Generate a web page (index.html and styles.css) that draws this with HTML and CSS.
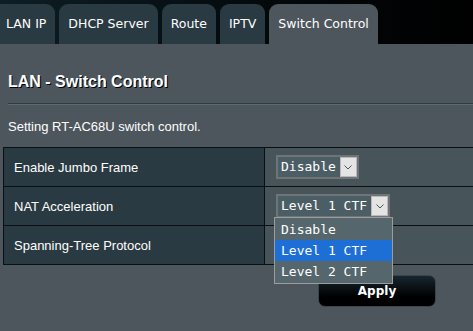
FILE: index.html
```html
<!DOCTYPE html>
<html lang="en">
<head>
    <meta charset="UTF-8">
    <meta name="viewport" content="width=device-width, initial-scale=1.0">
    <title>LAN - Switch Control</title>
    <link rel="stylesheet" href="styles.css">
</head>
<body>
    <nav class="tabs">
        <a href="#" class="tab">LAN IP</a>
        <a href="#" class="tab">DHCP Server</a>
        <a href="#" class="tab">Route</a>
        <a href="#" class="tab">IPTV</a>
        <a href="#" class="tab active">Switch Control</a>
    </nav>
    <main class="content">
        <h1 class="title">LAN - Switch Control</h1>
        <div class="divider"></div>
        <p class="desc">Setting RT-AC68U switch control.</p>
        <table class="settings">
            <tr>
                <th>Enable Jumbo Frame</th>
                <td>
                    <span class="select">
                        <span class="value">Disable</span>
                        <span class="arrow"><svg width="8" height="5" viewBox="0 0 8 5"><polyline points="0.5,0.5 4,4 7.5,0.5" fill="none" stroke="#555" stroke-width="1"/></svg></span>
                    </span>
                </td>
            </tr>
            <tr>
                <th>NAT Acceleration</th>
                <td>
                    <span class="select">
                        <span class="value">Level 1 CTF</span>
                        <span class="arrow"><svg width="8" height="5" viewBox="0 0 8 5"><polyline points="0.5,0.5 4,4 7.5,0.5" fill="none" stroke="#555" stroke-width="1"/></svg></span>
                        <ul class="options">
                            <li>Disable</li>
                            <li class="selected">Level 1 CTF</li>
                            <li>Level 2 CTF</li>
                        </ul>
                    </span>
                </td>
            </tr>
            <tr>
                <th>Spanning-Tree Protocol</th>
                <td></td>
            </tr>
        </table>
        <div class="actions">
            <button class="apply">Apply</button>
        </div>
    </main>
</body>
</html>
```

FILE: styles.css
```css
* {
    box-sizing: border-box;
    margin: 0;
    padding: 0;
}
body {
    font-family: 'Liberation Sans', Arial, sans-serif;
    background-color: #4d565d;
    color: #fff;
    overflow: hidden;
}
.tabs {
    display: flex;
    gap: 4px;
    height: 44px;
    padding-top: 4px;
    background: linear-gradient(to right, #0e1e25, #03080a 60%, #000);
}
.tab {
    height: 40px;
    line-height: 40px;
    padding: 0 9px;
    border-radius: 9px 9px 0 0;
    background-color: #2a3a42;
    color: #fff;
    text-decoration: none;
    font-family: 'DejaVu Sans', Verdana, sans-serif;
    font-size: 12.5px;
}
.tab:first-child {
    padding-left: 6px;
    border-top-left-radius: 0;
}
.tab.active {
    background-color: #4d565d;
}
.content {
    padding-left: 3px;
}
.title {
    margin-top: 28px;
    padding-left: 5px;
    font-size: 16px;
    line-height: 20px;
    font-weight: bold;
    text-shadow: 1px 1px 0 #000;
}
.divider {
    margin: 11px 0 0 5px;
    border-top: 1px solid #2e3b42;
    border-bottom: 1px solid #5a6b72;
}
.desc {
    margin-top: 14px;
    padding-left: 5px;
    font-size: 13px;
    line-height: 16px;
}
.settings {
    margin-top: 12px;
    width: 100%;
    border-collapse: collapse;
    border: 1px solid #0c0f11;
    border-right: 0;
    font-size: 13px;
}
.settings th, .settings td {
    height: 39px;
    border: 1px solid #0c0f11;
    vertical-align: middle;
}
.settings td {
    border-right: 0;
}
.settings th {
    width: 261px;
    padding-left: 10px;
    text-align: left;
    font-weight: normal;
    background-color: #2a3a42;
}
.settings td {
    padding-left: 11px;
    background-color: #475459;
}
.select {
    position: relative;
    display: inline-flex;
    align-items: stretch;
    height: 24px;
    vertical-align: middle;
    border: 2px solid #6f7476;
    background-color: #4c5e65;
    font-family: 'DejaVu Sans Mono', 'Liberation Mono', monospace;
    font-size: 13px;
}
.select .value {
    padding: 0 4px 0 3px;
    line-height: 20px;
}
.select .arrow {
    display: flex;
    align-items: center;
    justify-content: center;
    width: 17px;
    background-color: #e4e4e4;
    border: 1px solid #b9b9b9;
}
.options {
    position: absolute;
    top: calc(100% + 1px);
    left: -4px;
    width: 119px;
    padding: 1px 0;
    list-style: none;
    background-color: #55666d;
    border: 1px solid #9c9c9c;
    z-index: 10;
}
.options li {
    height: 21px;
    line-height: 21px;
    padding-left: 6px;
}
.options li.selected {
    background-color: #1d6fd6;
}
.actions {
    display: flex;
    justify-content: flex-end;
    margin-top: 10px;
    padding-right: 37px;
}
.apply {
    width: 118px;
    height: 32px;
    border: 1px solid #39464c;
    border-radius: 7px;
    background: linear-gradient(#17272f, #000 70%);
    color: #fff;
    font-family: 'DejaVu Sans', Verdana, sans-serif;
    font-weight: bold;
    font-size: 12px;
}
```
